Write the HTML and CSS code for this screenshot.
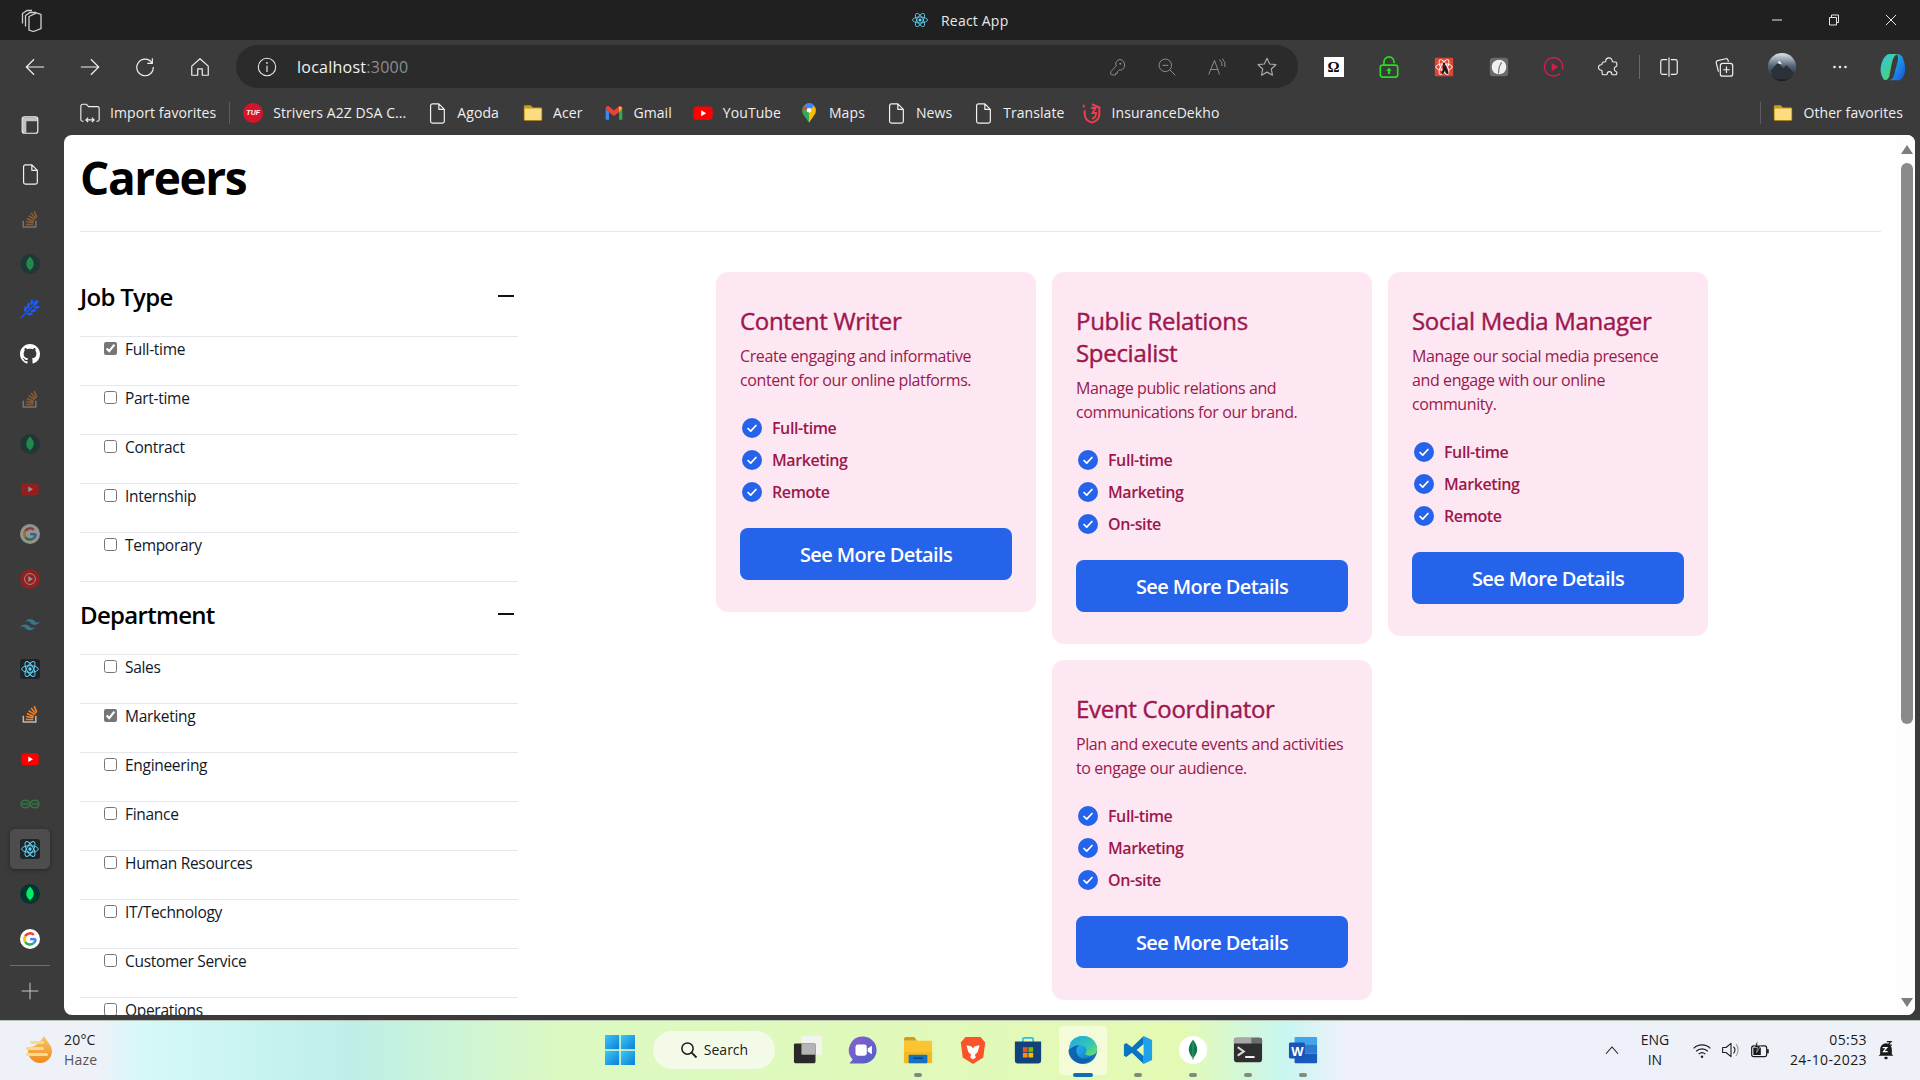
FILE: index.html
```html
<!DOCTYPE html>
<html lang="en">
<head>
<meta charset="utf-8">
<title>React App</title>
<link rel="stylesheet" href="styles.css">
</head>
<body>
<svg class="sprite" xmlns="http://www.w3.org/2000/svg">
  <defs>
    <linearGradient id="gEdge" x1="0" y1="0" x2="1" y2="1"><stop offset="0" stop-color="#35c1f1"/><stop offset=".5" stop-color="#1b9de2"/><stop offset="1" stop-color="#0c59a4"/></linearGradient>
    <linearGradient id="gEdgeTop" x1="0" y1="0" x2="1" y2="1"><stop offset="0" stop-color="#1fa8e0"/><stop offset=".6" stop-color="#35c8b0"/><stop offset="1" stop-color="#7ce04e"/></linearGradient>
    <linearGradient id="gCopL" x1="0" y1="0" x2="1" y2="1"><stop offset="0" stop-color="#2fc4e8"/><stop offset="1" stop-color="#52d64e"/></linearGradient>
    <linearGradient id="gWin" x1="0" y1="0" x2="1" y2="1"><stop offset="0" stop-color="#3fc6f8"/><stop offset="1" stop-color="#0a7fd6"/></linearGradient>
    <linearGradient id="gCop" x1="0" y1="0" x2="1" y2="1"><stop offset="0" stop-color="#2bd4c4"/><stop offset=".5" stop-color="#1b8fe8"/><stop offset="1" stop-color="#1b4fd0"/></linearGradient>
    <linearGradient id="gAvatar" x1="0" y1="0" x2="0" y2="1"><stop offset="0" stop-color="#dfe4ea"/><stop offset=".45" stop-color="#56677a"/><stop offset="1" stop-color="#15191e"/></linearGradient>
    <linearGradient id="gSun" x1="0" y1="0" x2="0" y2="1"><stop offset="0" stop-color="#f9c86a"/><stop offset="1" stop-color="#ee8a1e"/></linearGradient>
    <linearGradient id="gMeet" x1="0" y1="0" x2="1" y2="1"><stop offset="0" stop-color="#8a5fd0"/><stop offset="1" stop-color="#4f5fc8"/></linearGradient>
  </defs>
  <symbol id="i-tabs" viewBox="0 0 24 24"><g fill="none" stroke="currentColor" stroke-width="1.300"><path d="M2.500 15.500V5.500L7 2.500h5"/><path d="M5.500 18.500V7.500L10 4.500h6"/><path d="M9 8.500 16.500 5l4.500 1.500v14l-7.500 3-4.500-1.500z"/></g></symbol>
  <symbol id="i-back" viewBox="0 0 24 24"><path d="M22 12H2.500M11 3.500 2.500 12l8.500 8.500" fill="none" stroke="currentColor" stroke-width="1.300"/></symbol>
  <symbol id="i-forward" viewBox="0 0 24 24"><path d="M2 12h19.500M13 3.500l8.500 8.500-8.500 8.500" fill="none" stroke="currentColor" stroke-width="1.300"/></symbol>
  <symbol id="i-refresh" viewBox="0 0 24 24"><path d="M19.500 7.500A9 9 0 1 0 21 12M20 2.500v5.500h-5.500" fill="none" stroke="currentColor" stroke-width="1.300"/></symbol>
  <symbol id="i-home" viewBox="0 0 24 24"><path d="M3 11 12 3l9 8v10h-6.500v-7h-5v7H3z" fill="none" stroke="currentColor" stroke-width="1.300" stroke-linejoin="round"/></symbol>
  <symbol id="i-info" viewBox="0 0 24 24"><circle cx="12" cy="12" r="9.500" fill="none" stroke="currentColor" stroke-width="1.200"/><path d="M12 10.500v7" stroke="currentColor" stroke-width="1.300"/><circle cx="12" cy="7.500" r="1" fill="currentColor"/></symbol>
  <symbol id="i-key" viewBox="0 0 24 24"><path d="M14.500 3a6.500 6.500 0 0 1 2 12.700l-2-.200-2 2v2h-2v2h-5l-1-1v-3l6.500-6.500a6.500 6.500 0 0 1 3.500-8z" fill="none" stroke="currentColor" stroke-width="1.200"/><circle cx="16" cy="8" r="1.200" fill="currentColor"/></symbol>
  <symbol id="i-zoom" viewBox="0 0 24 24"><circle cx="10" cy="10" r="7.500" fill="none" stroke="currentColor" stroke-width="1.200"/><path d="M6.500 10h7M15.500 15.500 22 22" stroke="currentColor" stroke-width="1.200"/></symbol>
  <symbol id="i-read" viewBox="0 0 24 24"><path d="M2 21 9 4l6 17M4.500 15h9M15 3a9 9 0 0 1 3 8M18.500 2a11 11 0 0 1 3 10" fill="none" stroke="currentColor" stroke-width="1.200"/></symbol>
  <symbol id="i-star" viewBox="0 0 24 24"><path d="m12 2.500 2.900 6.200 6.800.8-5 4.700 1.300 6.800-6-3.400-6 3.400 1.300-6.800-5-4.700 6.800-.8z" fill="none" stroke="currentColor" stroke-width="1.300" stroke-linejoin="round"/></symbol>
  <symbol id="i-lock" viewBox="0 0 24 24"><g fill="none" stroke="#22e01f" stroke-width="1.800"><rect x="2.500" y="10" width="19" height="13" rx="2.500"/><path d="M6.500 10V6.500a5.500 5.500 0 0 1 11 0V8"/></g><path d="M12 12.800l3 3.200h-1.800v3.500h-2.400V16H9z" fill="#22e01f"/></symbol>
  <symbol id="i-redext" viewBox="0 0 24 24"><rect x="2" y="2" width="20" height="20" rx="1" fill="#e04534"/><g fill="none" stroke="#fff" stroke-width="1"><ellipse cx="12" cy="12" rx="9" ry="3.500"/><ellipse cx="12" cy="12" rx="9" ry="3.500" transform="rotate(60 12 12)"/><ellipse cx="12" cy="12" rx="9" ry="3.500" transform="rotate(120 12 12)"/></g><circle cx="12" cy="8.500" r="1.500" fill="#1a1a1a"/><path d="M11 10l3 .5 2 4.500 1 4-2 .5-2-3.500-2 3.500-2-.5 2-5z" fill="#1a1a1a"/></symbol>
  <symbol id="i-greyext" viewBox="0 0 24 24"><rect x="2" y="2" width="20" height="20" rx="3.500" fill="#6b6b6b"/><circle cx="12" cy="12" r="8" fill="#f0f0f0"/><path d="M11.500 19c0-5 1-9 3.500-12" fill="none" stroke="#777" stroke-width="1.300"/></symbol>
  <symbol id="i-playring" viewBox="0 0 24 24"><path d="M18.500 19A10 10 0 1 1 21 15" fill="none" stroke="#d41c4e" stroke-width="1.500"/><path d="m9.500 7.500 7 4.500-7 4.500z" fill="#d41c4e"/></symbol>
  <symbol id="i-puzzle" viewBox="0 0 24 24"><path d="M8.500 5.500a3.500 3.500 0 0 1 7 0c0 .5.500 1 1 1h2.500a1.500 1.500 0 0 1 1.500 1.500v2.500c0 .5-.5 1-1 1a3 3 0 0 0 0 5.500c.5.200 1 .5 1 1v1a1.500 1.500 0 0 1-1.500 1.500h-3c-.5 0-1-.5-1-1a2.500 2.500 0 0 0-5 0c0 .5-.5 1-1 1H6a1.500 1.500 0 0 1-1.500-1.500v-2.500c0-.5-.5-1-1-1a3 3 0 0 1 0-6c.5 0 1-.5 1-1V8A1.500 1.500 0 0 1 6 6.500h1.500c.5 0 1-.5 1-1z" fill="none" stroke="currentColor" stroke-width="1.200"/></symbol>
  <symbol id="i-split" viewBox="0 0 24 24"><path d="M10 4H5a2 2 0 0 0-2 2v12a2 2 0 0 0 2 2h5M14 4h5a2 2 0 0 1 2 2v12a2 2 0 0 1-2 2h-5M12 1.500v21" fill="none" stroke="currentColor" stroke-width="1.300"/></symbol>
  <symbol id="i-coll" viewBox="0 0 24 24"><path d="M6 17 3.500 7.500a2 2 0 0 1 1.500-2.500L14 3a2 2 0 0 1 2.300 1.300l.5 2" fill="none" stroke="currentColor" stroke-width="1.300"/><rect x="8" y="8" width="13.500" height="14" rx="2.500" fill="none" stroke="currentColor" stroke-width="1.300"/><path d="M14.700 11.500v7M11.200 15h7" stroke="currentColor" stroke-width="1.300"/></symbol>
  <symbol id="i-avatar" viewBox="0 0 32 32"><circle cx="16" cy="16" r="15" fill="url(#gAvatar)"/><path d="M4 20 12 11l5 6 4-3 8 8-6 7H9z" fill="#2b3138"/><path d="M11 12l2-3 3 4z" fill="#eef"/></symbol>
  <symbol id="i-dots" viewBox="0 0 24 24"><circle cx="6" cy="12" r="1.400" fill="currentColor"/><circle cx="12" cy="12" r="1.400" fill="currentColor"/><circle cx="18" cy="12" r="1.400" fill="currentColor"/></symbol>
  <symbol id="i-copilot" viewBox="0 0 32 32"><path d="M12 2h9c-3 1-5 4-6 9l-3 15c-1 3-3 4-5 4-3-3-5-9-4-14 1-7 5-14 9-14z" fill="url(#gCopL)"/><path d="M20 2c6 0 7 5 8 9 2 8 1 16-5 19H12c4-1 5-4 6-9l3-11c1-4 0-7-1-8z" fill="url(#gCop)"/></symbol>
  <symbol id="i-import" viewBox="0 0 24 24"><path d="M5 21H4a2 2 0 0 1-2-2V4.500a2 2 0 0 1 2-2h4l2.500 2.500h9.500a2 2 0 0 1 2 2v12a2 2 0 0 1-2 2h-1M7.500 19.500h9M10 17l-2.500 2.500L10 22M14 17l2.500 2.500L14 22" fill="none" stroke="currentColor" stroke-width="1.200"/></symbol>
  <symbol id="i-doc" viewBox="0 0 24 24"><path d="M5 4a2 2 0 0 1 2-2h7l6 6v13a2 2 0 0 1-2 2H7a2 2 0 0 1-2-2zM14 2v6h6" fill="none" stroke="currentColor" stroke-width="1.300" stroke-linejoin="round"/></symbol>
  <symbol id="i-folder" viewBox="0 0 24 24"><path d="M2 5a1.500 1.500 0 0 1 1.500-1.500h6L12 6h8.500A1.500 1.500 0 0 1 22 7.500V19a1.500 1.500 0 0 1-1.500 1.500h-17A1.500 1.500 0 0 1 2 19z" fill="#c99a1b"/><rect x="3" y="7" width="18" height="12.500" rx="1" fill="#fbdc7e"/></symbol>
  <symbol id="i-gmail" viewBox="0 0 24 24"><path d="M2 6v14h4V11z" fill="#4285f4"/><path d="M22 6v14h-4V11z" fill="#34a853"/><path d="M2 6c0-2 2-3 4-2l6 5 6-5c2-1 4 0 4 2l-4 5-6 4.500L6 11z" fill="#ea4335"/><path d="M18 4l4 2-4 5z" fill="#fbbc04"/></symbol>
  <symbol id="i-yt" viewBox="0 0 24 24"><rect x="1.500" y="5" width="21" height="14.500" rx="4" fill="#f00"/><path d="m10 9 5.500 3.200L10 15.500z" fill="#fff"/></symbol>
  <symbol id="i-maps" viewBox="0 0 24 24"><path d="M12 1.500a7.500 7.500 0 0 0-7.500 7.500c0 3 1 4.500 3 7l4.500 6.500z" fill="#34a853"/><path d="M12 1.500a7.500 7.500 0 0 1 7.500 7.500c0 3-1 4.500-3 7L12 22.500z" fill="#fbbc04"/><path d="M6 4 12 9H5z" fill="#ea4335"/><path d="M7 3.500A7 7 0 0 1 18 4l-6 5z" fill="#4285f4"/><circle cx="12" cy="9" r="2.500" fill="#fff"/></symbol>
  <symbol id="i-ins" viewBox="0 0 24 24"><path d="M3 3v3M12 2.500l8 3.500v7c0 5-3.500 8-8 9.500-4.500-1.500-8-4.500-8-9.500V9" fill="none" stroke="#ef3c4e" stroke-width="2.200"/><path d="M11 6.500h5l-3.500 5.500h4c0 3.500-2 5.500-4.500 6.500" fill="none" stroke="#ef3c4e" stroke-width="2"/></symbol>
  <symbol id="i-panel" viewBox="0 0 24 24"><rect x="3.500" y="3" width="17" height="18" rx="2.500" fill="none" stroke="currentColor" stroke-width="1.300"/><path d="M4 5.500A2 2 0 0 1 6 3.500h12a2 2 0 0 1 2 2V8H8v12.500H6a2 2 0 0 1-2-2z" fill="currentColor" opacity=".75"/></symbol>
  <symbol id="i-so" viewBox="0 0 24 24"><path d="M4 14v7.500h15V14" fill="none" stroke="#bcbbbb" stroke-width="1.800"/><path d="M7 18.500h9M7.300 15l8.800 1.500M8.300 11.500l8.200 3.400M10.300 8l7.400 4.800M13.300 4.800l5.600 6.500M17 2.500l3.200 7.500" fill="none" stroke="#f48024" stroke-width="1.900"/></symbol>
  <symbol id="i-mongo" viewBox="0 0 24 24"><circle cx="12" cy="12" r="12" fill="#023430"/><path d="M12 3c-3 3-4.500 6-4.500 9s2 5.500 4 7l.5 2.500.5-2.500c2-1.500 4-4 4-7s-1.500-6-4.500-9z" fill="#00ed64"/></symbol>
  <symbol id="i-wheat" viewBox="0 0 24 24"><path d="M1 23 17 7" stroke="#1a5cff" stroke-width="1.500"/><g fill="#1a5cff"><ellipse cx="19" cy="4.500" rx="2" ry="4" transform="rotate(45 19 4.500)"/><ellipse cx="14" cy="4" rx="1.700" ry="3.500" transform="rotate(10 14 4)"/><ellipse cx="20" cy="10" rx="1.700" ry="3.500" transform="rotate(80 20 10)"/><ellipse cx="10" cy="8" rx="1.700" ry="3.500" transform="rotate(10 10 8)"/><ellipse cx="16" cy="14" rx="1.700" ry="3.500" transform="rotate(80 16 14)"/><ellipse cx="6.500" cy="12" rx="1.700" ry="3.500" transform="rotate(10 6.500 12)"/><ellipse cx="12" cy="18" rx="1.700" ry="3.500" transform="rotate(80 12 18)"/></g></symbol>
  <symbol id="i-github" viewBox="0 0 16 16"><path fill="#fff" d="M8 0C3.580 0 0 3.580 0 8c0 3.540 2.290 6.530 5.470 7.590.4.070.55-.17.55-.38 0-.19-.01-.82-.01-1.490-2.010.37-2.530-.49-2.690-.94-.09-.23-.48-.94-.82-1.130-.28-.15-.68-.52-.01-.53.63-.01 1.080.58 1.230.82.72 1.210 1.870.87 2.330.66.070-.52.28-.87.51-1.070-1.780-.2-3.640-.89-3.640-3.950 0-.87.31-1.590.82-2.150-.08-.2-.36-1.020.08-2.120 0 0 .67-.21 2.200.82.64-.18 1.320-.27 2-.27.68 0 1.360.09 2 .27 1.530-1.040 2.200-.82 2.200-.82.44 1.100.16 1.920.08 2.120.51.56.82 1.270.82 2.150 0 3.070-1.870 3.750-3.650 3.950.29.25.54.73.54 1.480 0 1.070-.01 1.930-.01 2.200 0 .21.15.46.55.38A8.013 8.013 0 0 0 16 8c0-4.420-3.580-8-8-8z"/></symbol>
  <symbol id="i-google" viewBox="0 0 24 24"><circle cx="12" cy="12" r="12" fill="#fff"/><path d="M18.800 12.200H12.200" stroke="#4285f4" stroke-width="3"/><path d="M18.700 12a6.800 6.800 0 0 1-2.200 5" fill="none" stroke="#4285f4" stroke-width="3"/><path d="M16.500 17A6.800 6.800 0 0 1 6.200 15.500" fill="none" stroke="#34a853" stroke-width="3"/><path d="M6.200 15.500a6.800 6.800 0 0 1 0-7" fill="none" stroke="#fbbc05" stroke-width="3"/><path d="M6.200 8.500A6.800 6.800 0 0 1 16.600 7" fill="none" stroke="#ea4335" stroke-width="3"/></symbol>
  <symbol id="i-ytm" viewBox="0 0 24 24"><circle cx="12" cy="12" r="12" fill="#f00"/><circle cx="12" cy="12" r="6.500" fill="none" stroke="#fff" stroke-width="1.200"/><path d="m10 8.500 5.500 3.500-5.500 3.500z" fill="#fff"/></symbol>
  <symbol id="i-tw" viewBox="0 0 24 24"><path d="M12 6c-3 0-5 1.500-6 4.500 1-1.500 2.500-2 4-1.700 1 .2 1.700.9 2.500 1.700 1.200 1.200 2.500 2.500 5.500 2.500s5-1.500 6-4.500c-1 1.500-2.500 2-4 1.700-1-.2-1.700-.9-2.500-1.700C16.300 7.300 15 6 12 6zM6 12.500c-3 0-5 1.500-6 4.500 1-1.500 2.500-2 4-1.700 1 .2 1.700.9 2.500 1.700C7.700 18.200 9 19.500 12 19.500s5-1.500 6-4.500c-1 1.500-2.500 2-4 1.700-1-.2-1.700-.9-2.500-1.700-1.200-1.200-2.500-2.500-5.500-2.500z" fill="#38bdf8"/></symbol>
  <symbol id="i-react" viewBox="0 0 24 24"><rect width="24" height="24" rx="3" fill="#20232a"/><g fill="none" stroke="#61dafb" stroke-width="1.100"><ellipse cx="12" cy="12" rx="10" ry="4"/><ellipse cx="12" cy="12" rx="10" ry="4" transform="rotate(60 12 12)"/><ellipse cx="12" cy="12" rx="10" ry="4" transform="rotate(120 12 12)"/></g><circle cx="12" cy="12" r="2" fill="#61dafb"/></symbol>
  <symbol id="i-reactbare" viewBox="0 0 24 24"><g fill="none" stroke="#61dafb" stroke-width="1.100"><ellipse cx="12" cy="12" rx="10" ry="4"/><ellipse cx="12" cy="12" rx="10" ry="4" transform="rotate(60 12 12)"/><ellipse cx="12" cy="12" rx="10" ry="4" transform="rotate(120 12 12)"/></g><circle cx="12" cy="12" r="2" fill="#61dafb"/></symbol>
  <symbol id="i-gfg" viewBox="0 0 24 24"><path d="M12 12c-1-3-3.500-4.500-6-4.500A4.500 4.500 0 0 0 6 16.500c2.500 0 5-1.500 6-4.500zm0 0c1-3 3.500-4.500 6-4.500a4.500 4.500 0 0 1 0 9c-2.500 0-5-1.500-6-4.500zM1.500 12h8M14.500 12h8" fill="none" stroke="#2f8d46" stroke-width="2"/></symbol>
  <symbol id="i-plus" viewBox="0 0 24 24"><path d="M12 2v20M2 12h20" stroke="currentColor" stroke-width="1.200"/></symbol>
  <symbol id="i-check" viewBox="0 0 24 24"><circle cx="12" cy="12" r="10" fill="#2563eb"/><path d="m8 12.500 2.700 2.700L16 9.500" fill="none" stroke="#fff" stroke-width="1.700" stroke-linecap="round" stroke-linejoin="round"/></symbol>
  <symbol id="i-sun" viewBox="0 0 32 32"><path d="M20 2c3 6 8 9 8 15a12 12 0 0 1-24 0c0-2 1-3 2-4 4 0 9-3 14-11z" fill="url(#gSun)"/><g fill="#f7d98f"><rect x="6" y="7" width="14" height="3" rx="1.500"/><rect x="2" y="13" width="18" height="3" rx="1.500"/><rect x="2" y="19" width="22" height="3" rx="1.500"/></g></symbol>
  <symbol id="i-win" viewBox="0 0 30 30"><rect width="14.200" height="14.200" fill="url(#gWin)"/><rect x="15.800" width="14.200" height="14.200" fill="url(#gWin)"/><rect y="15.800" width="14.200" height="14.200" fill="url(#gWin)"/><rect x="15.800" y="15.800" width="14.200" height="14.200" fill="url(#gWin)"/></symbol>
  <symbol id="i-search" viewBox="0 0 24 24"><circle cx="10" cy="10" r="7.500" fill="none" stroke="#1a1a1a" stroke-width="2"/><path d="m15.500 15.500 6.500 6.500" stroke="#1a1a1a" stroke-width="2.400"/></symbol>
  <symbol id="i-taskview" viewBox="0 0 32 32"><rect x="9" y="1" width="22" height="20" rx="1" fill="#f4f4f4" opacity=".9"/><rect x="1" y="9" width="23" height="21" rx="1.500" fill="#2a2a2a"/><rect x="9" y="9" width="15" height="12" fill="#b5b5b5"/></symbol>
  <symbol id="i-meet" viewBox="0 0 32 32"><path d="M16 1.500a14.500 14.500 0 0 1 0 29H1.500l3.500-4.500A14.500 14.500 0 0 1 16 1.500z" fill="url(#gMeet)"/><rect x="8" y="10" width="12" height="12" rx="2.500" fill="#fff"/><path d="m21 14.500 4.500-3v9l-4.500-3z" fill="#fff"/></symbol>
  <symbol id="i-explorer" viewBox="0 0 32 32"><path d="M1 4a2 2 0 0 1 2-2h9l3 4H1z" fill="#d49b17"/><rect x="1" y="6" width="30" height="24" rx="1.500" fill="#fcc430"/><rect x="1" y="18" width="30" height="12" fill="#f5b81f"/><rect x="6" y="21" width="20" height="9" rx="1" fill="#1273c5"/><rect x="11" y="24" width="10" height="1.500" fill="#0c3f70"/></symbol>
  <symbol id="i-brave" viewBox="0 0 32 32"><path d="M8 2h16l5 6-2 16-11 7-11-7L3 8z" fill="#fb542b"/><path d="M9 11l5 1 2 2 2-2 5-1-2 7-3 3 1 3-3 2-3-2 1-3-3-3z" fill="#fff"/></symbol>
  <symbol id="i-store" viewBox="0 0 32 32"><path d="M10.500 8V4.500a1.500 1.500 0 0 1 1.500-1.500h8a1.500 1.500 0 0 1 1.500 1.500V8" fill="none" stroke="#29c0e8" stroke-width="1.800"/><path d="M2 7h28v20a3.500 3.500 0 0 1-3.500 3.500h-21A3.500 3.500 0 0 1 2 27z" fill="#12427a"/><rect x="10.500" y="13" width="5" height="5" fill="#f25022"/><rect x="16.500" y="13" width="5" height="5" fill="#7fba00"/><rect x="10.500" y="19" width="5" height="5" fill="#ff8c1a"/><rect x="16.500" y="19" width="5" height="5" fill="#ffb900"/></symbol>
  <symbol id="i-edge" viewBox="0 0 32 32"><circle cx="16" cy="16" r="15" fill="url(#gEdge)"/><path d="M2 9C5 4 10 1 16 1c8 0 15 6 15 14 0 5-4 7-8 7-2.500 0-4.500-.8-5-2.200 2.500-1 3-8-4-8.800C8 10.500 4 9 2 9z" fill="url(#gEdgeTop)"/><path d="M12 11c-2.500 1.500-3.500 4-3 7 1 5 5.500 7.500 10 7 3-.3 5.500-1.500 7.500-3.500-2.500 5.500-7.500 9-13.500 8.500-7-.8-12.500-6-12.500-14C4 13 8 10.500 12 11z" fill="#0c59a4" opacity=".85"/></symbol>
  <symbol id="i-vscode" viewBox="0 0 32 32"><path d="M22 1l9 4.300v21.400L22 31z" fill="#1fa0ea"/><path d="M22 1 9.500 13 3.500 8.500 1 10v12l2.500 1.500 6-4.500L22 31v-8.500L14.500 16 22 9.500z" fill="#0a74c2"/></symbol>
  <symbol id="i-mongow" viewBox="0 0 32 32"><circle cx="16" cy="16" r="15" fill="#fff"/><path d="M16 5c-3 3.500-4.500 7-4.500 10.500S13.500 22 15.300 24l.7 3 .7-3c1.800-2 3.800-5 3.800-8.500S19 8.500 16 5z" fill="#0d7a4c"/><path d="M16 7v19" stroke="#64b48e" stroke-width=".6"/></symbol>
  <symbol id="i-term" viewBox="0 0 32 32"><rect x="1" y="3" width="30" height="26" rx="2.500" fill="#2f2f2f"/><path d="M1 9V5.500A2.500 2.500 0 0 1 3.500 3H20v6z" fill="#a8a8a8"/><path d="M20 3h8.500A2.500 2.500 0 0 1 31 5.500V9H20z" fill="#6d6d6d"/><path d="m5 13 6.500 4.500L5 22" fill="none" stroke="#d8d8d8" stroke-width="2.200"/><path d="M13 23.500h10" stroke="#fff" stroke-width="2"/></symbol>
  <symbol id="i-word" viewBox="0 0 32 32"><path d="M7 3a1 1 0 0 1 1-1h22a1 1 0 0 1 1 1v7H7z" fill="#41a5ee"/><rect x="7" y="10" width="24" height="10" fill="#2b7cd3"/><path d="M7 20h24v9a1 1 0 0 1-1 1H8a1 1 0 0 1-1-1z" fill="#185abd"/><rect x="1" y="8" width="17" height="17" rx="1.500" fill="#1a55b5"/></symbol>
  <symbol id="i-caret" viewBox="0 0 24 24"><path d="m4 17 8-9 8 9" fill="none" stroke="#1a1a1a" stroke-width="1.400"/></symbol>
  <symbol id="i-wifi" viewBox="0 0 24 24"><path d="M2 10a14 14 0 0 1 20 0M5 13.500a10 10 0 0 1 14 0M8 17a6 6 0 0 1 8 0" fill="none" stroke="#1a1a1a" stroke-width="1.400"/><circle cx="12" cy="20" r="1.500" fill="#1a1a1a"/></symbol>
  <symbol id="i-vol" viewBox="0 0 24 24"><path d="M2 9h4l6-5v16l-6-5H2z" fill="none" stroke="#1a1a1a" stroke-width="1.300" stroke-linejoin="round"/><path d="M15 8a6 6 0 0 1 0 8" fill="none" stroke="#1a1a1a" stroke-width="1.300"/><path d="M18 5a11 11 0 0 1 0 14" fill="none" stroke="#999" stroke-width="1.300"/></symbol>
  <symbol id="i-batt" viewBox="0 0 24 24"><rect x="2" y="7" width="18" height="13" rx="2.500" fill="none" stroke="#1a1a1a" stroke-width="1.400"/><rect x="4" y="9" width="9" height="9" fill="#1a1a1a"/><rect x="20.500" y="11" width="2" height="5" fill="#1a1a1a"/><path d="M9 1 5 9h4l-1 6 5-8H9z" fill="#1a1a1a" stroke="#eef1f8" stroke-width=".6"/></symbol>
  <symbol id="i-bell" viewBox="0 0 24 24"><path d="M5 17V11a7 7 0 0 1 14 0v6l2 2H3z" fill="#1a1a1a"/><rect x="10" y="20" width="4" height="3" rx="1.500" fill="#1a1a1a"/><path d="M13 2h5l-4 4h5" fill="none" stroke="#1a1a1a" stroke-width="1.500"/><path d="M8 9h5l-4 5h5" fill="none" stroke="#fff" stroke-width="1.500"/></symbol>
  <symbol id="i-min" viewBox="0 0 12 12"><path d="M1 6h10" stroke="currentColor" stroke-width="1"/></symbol>
  <symbol id="i-restore" viewBox="0 0 12 12"><path d="M1.500 3.500h7v7.500h-7zM3.500 3.500V1h7v7.500h-2" fill="none" stroke="currentColor" stroke-width="1"/></symbol>
  <symbol id="i-close" viewBox="0 0 12 12"><path d="m1 1 10 10M11 1 1 11" stroke="currentColor" stroke-width="1"/></symbol>
</svg>

<div class="titlebar">
  <svg class="ic tabs-ic"><use href="#i-tabs"/></svg>
  <div class="title"><svg class="ic ic-18"><use href="#i-reactbare"/></svg><span>React App</span></div>
  <div class="winctl">
    <svg class="ic ic-12"><use href="#i-min"/></svg>
    <svg class="ic ic-12"><use href="#i-restore"/></svg>
    <svg class="ic ic-12"><use href="#i-close"/></svg>
  </div>
</div>

<div class="toolbar">
  <div class="navgroup">
    <span class="tb"><svg class="ic ic-22"><use href="#i-back"/></svg></span>
    <span class="tb"><svg class="ic ic-22"><use href="#i-forward"/></svg></span>
    <span class="tb"><svg class="ic ic-22"><use href="#i-refresh"/></svg></span>
    <span class="tb"><svg class="ic ic-22"><use href="#i-home"/></svg></span>
  </div>
  <div class="address">
    <svg class="ic ic-22"><use href="#i-info"/></svg>
    <span class="url">localhost<span class="port">:3000</span></span>
    <div class="addr-actions">
      <span class="tb"><svg class="ic ic-20"><use href="#i-key"/></svg></span>
      <span class="tb"><svg class="ic ic-20"><use href="#i-zoom"/></svg></span>
      <span class="tb"><svg class="ic ic-20"><use href="#i-read"/></svg></span>
      <span class="tb tb-star"><svg class="ic ic-22"><use href="#i-star"/></svg></span>
    </div>
  </div>
  <div class="exts">
    <span class="tb"><span class="omega">Ω</span></span>
    <span class="tb"><svg class="ic ic-22"><use href="#i-lock"/></svg></span>
    <span class="tb"><svg class="ic ic-22"><use href="#i-redext"/></svg></span>
    <span class="tb"><svg class="ic ic-22"><use href="#i-greyext"/></svg></span>
    <span class="tb"><svg class="ic ic-22"><use href="#i-playring"/></svg></span>
    <span class="tb"><svg class="ic ic-22"><use href="#i-puzzle"/></svg></span>
    <span class="tb-div"></span>
    <span class="tb tb-after"><svg class="ic ic-22"><use href="#i-split"/></svg></span>
    <span class="tb"><svg class="ic ic-22"><use href="#i-coll"/></svg></span>
    <span class="tb tb-profile"><svg class="ic ic-30"><use href="#i-avatar"/></svg></span>
    <span class="tb"><svg class="ic ic-22"><use href="#i-dots"/></svg></span>
    <span class="tb tb-cop"><svg class="ic ic-30"><use href="#i-copilot"/></svg></span>
  </div>
</div>

<div class="body-row">
  <nav class="sidebar">
    <span class="sb sb-first"><svg class="ic ic-22 light"><use href="#i-panel"/></svg></span>
    <span class="sb"><svg class="ic ic-22 light"><use href="#i-doc"/></svg></span>
    <span class="sb dim"><svg class="ic ic-20"><use href="#i-so"/></svg></span>
    <span class="sb dim"><svg class="ic ic-20"><use href="#i-mongo"/></svg></span>
    <span class="sb"><svg class="ic ic-20"><use href="#i-wheat"/></svg></span>
    <span class="sb"><svg class="ic ic-20"><use href="#i-github"/></svg></span>
    <span class="sb dim"><svg class="ic ic-20"><use href="#i-so"/></svg></span>
    <span class="sb dim"><svg class="ic ic-20"><use href="#i-mongo"/></svg></span>
    <span class="sb dim"><svg class="ic ic-20"><use href="#i-yt"/></svg></span>
    <span class="sb dim"><svg class="ic ic-20"><use href="#i-google"/></svg></span>
    <span class="sb dim"><svg class="ic ic-20"><use href="#i-ytm"/></svg></span>
    <span class="sb dim"><svg class="ic ic-20"><use href="#i-tw"/></svg></span>
    <span class="sb"><svg class="ic ic-20"><use href="#i-react"/></svg></span>
    <span class="sb"><svg class="ic ic-20"><use href="#i-so"/></svg></span>
    <span class="sb"><svg class="ic ic-20"><use href="#i-yt"/></svg></span>
    <span class="sb dim-soft"><svg class="ic ic-20"><use href="#i-gfg"/></svg></span>
    <span class="sb"><span class="sb-active"><svg class="ic ic-20"><use href="#i-react"/></svg></span></span>
    <span class="sb"><svg class="ic ic-20"><use href="#i-mongo"/></svg></span>
    <span class="sb"><svg class="ic ic-20"><use href="#i-google"/></svg></span>
    <span class="sb-rule"></span>
    <span class="sb sb-plus"><svg class="ic ic-20 muted"><use href="#i-plus"/></svg></span>
  </nav>

  <div class="viewport-col">
    <div class="bookmarks">
      <a class="bm"><svg class="ic ic-22 light"><use href="#i-import"/></svg>Import favorites</a>
      <span class="bm-div"></span>
      <a class="bm"><span class="tuf">TUF</span>Strivers A2Z DSA C...</a>
      <a class="bm bm-agoda"><svg class="ic ic-22 light"><use href="#i-doc"/></svg>Agoda</a>
      <a class="bm bm-acer"><svg class="ic ic-22"><use href="#i-folder"/></svg>Acer</a>
      <a class="bm"><svg class="ic ic-20"><use href="#i-gmail"/></svg>Gmail</a>
      <a class="bm bm-youtube"><svg class="ic ic-22"><use href="#i-yt"/></svg>YouTube</a>
      <a class="bm"><svg class="ic ic-22"><use href="#i-maps"/></svg>Maps</a>
      <a class="bm"><svg class="ic ic-22 light"><use href="#i-doc"/></svg>News</a>
      <a class="bm bm-translate"><svg class="ic ic-22 light"><use href="#i-doc"/></svg>Translate</a>
      <a class="bm"><svg class="ic ic-22"><use href="#i-ins"/></svg>InsuranceDekho</a>
      <span class="bm-div bm-div-end"></span>
      <a class="bm"><svg class="ic ic-22"><use href="#i-folder"/></svg>Other favorites</a>
    </div>

    <div class="viewport">
      <main class="page">
        <header class="page-head"><h1>Careers</h1></header>
        <div class="page-body">
          <aside class="filters">
            <section class="filter">
              <div class="filter-head"><h2>Job Type</h2><span class="minus"></span></div>
              <label class="opt"><input type="checkbox" checked>Full-time</label>
              <label class="opt"><input type="checkbox">Part-time</label>
              <label class="opt"><input type="checkbox">Contract</label>
              <label class="opt"><input type="checkbox">Internship</label>
              <label class="opt"><input type="checkbox">Temporary</label>
            </section>
            <section class="filter">
              <div class="filter-head"><h2>Department</h2><span class="minus"></span></div>
              <label class="opt"><input type="checkbox">Sales</label>
              <label class="opt"><input type="checkbox" checked>Marketing</label>
              <label class="opt"><input type="checkbox">Engineering</label>
              <label class="opt"><input type="checkbox">Finance</label>
              <label class="opt"><input type="checkbox">Human Resources</label>
              <label class="opt"><input type="checkbox">IT/Technology</label>
              <label class="opt"><input type="checkbox">Customer Service</label>
              <label class="opt"><input type="checkbox">Operations</label>
            </section>
          </aside>
          <div class="cards">
            <article class="card">
              <h3>Content Writer</h3>
              <p>Create engaging and informative content for our online platforms.</p>
              <ul>
                <li><svg class="ic ic-24"><use href="#i-check"/></svg>Full-time</li>
                <li><svg class="ic ic-24"><use href="#i-check"/></svg>Marketing</li>
                <li><svg class="ic ic-24"><use href="#i-check"/></svg>Remote</li>
              </ul>
              <button type="button">See More Details</button>
            </article>
            <article class="card">
              <h3>Public Relations Specialist</h3>
              <p>Manage public relations and communications for our brand.</p>
              <ul>
                <li><svg class="ic ic-24"><use href="#i-check"/></svg>Full-time</li>
                <li><svg class="ic ic-24"><use href="#i-check"/></svg>Marketing</li>
                <li><svg class="ic ic-24"><use href="#i-check"/></svg>On-site</li>
              </ul>
              <button type="button">See More Details</button>
            </article>
            <article class="card">
              <h3>Social Media Manager</h3>
              <p>Manage our social media presence and engage with our online community.</p>
              <ul>
                <li><svg class="ic ic-24"><use href="#i-check"/></svg>Full-time</li>
                <li><svg class="ic ic-24"><use href="#i-check"/></svg>Marketing</li>
                <li><svg class="ic ic-24"><use href="#i-check"/></svg>Remote</li>
              </ul>
              <button type="button">See More Details</button>
            </article>
            <article class="card card-center">
              <h3>Event Coordinator</h3>
              <p>Plan and execute events and activities to engage our audience.</p>
              <ul>
                <li><svg class="ic ic-24"><use href="#i-check"/></svg>Full-time</li>
                <li><svg class="ic ic-24"><use href="#i-check"/></svg>Marketing</li>
                <li><svg class="ic ic-24"><use href="#i-check"/></svg>On-site</li>
              </ul>
              <button type="button">See More Details</button>
            </article>
          </div>
        </div>
      </main>
      <div class="scrollbar">
        <span class="arrow arrow-up"></span>
        <span class="thumb"></span>
        <span class="arrow arrow-down"></span>
      </div>
    </div>
  </div>
</div>

<footer class="taskbar">
  <div class="weather">
    <svg class="ic ic-32"><use href="#i-sun"/></svg>
    <div class="weather-text"><span>20°C</span><span class="haze">Haze</span></div>
  </div>
  <div class="tasks">
    <span class="winlogo"><svg class="ic ic-30"><use href="#i-win"/></svg></span>
    <span class="searchbox"><svg class="ic ic-18"><use href="#i-search"/></svg>Search</span>
    <span class="app"><svg class="ic ic-30"><use href="#i-taskview"/></svg></span>
    <span class="app"><svg class="ic ic-30"><use href="#i-meet"/></svg></span>
    <span class="app"><svg class="ic ic-30"><use href="#i-explorer"/></svg><i class="dot"></i></span>
    <span class="app"><svg class="ic ic-30"><use href="#i-brave"/></svg></span>
    <span class="app"><svg class="ic ic-30"><use href="#i-store"/></svg></span>
    <span class="app app-active"><svg class="ic ic-30"><use href="#i-edge"/></svg><i class="dot dot-active"></i></span>
    <span class="app"><svg class="ic ic-30"><use href="#i-vscode"/></svg><i class="dot"></i></span>
    <span class="app"><svg class="ic ic-30"><use href="#i-mongow"/></svg><i class="dot"></i></span>
    <span class="app"><svg class="ic ic-30"><use href="#i-term"/></svg><i class="dot"></i></span>
    <span class="app app-word"><svg class="ic ic-30"><use href="#i-word"/></svg><b class="word-w">W</b><i class="dot"></i></span>
  </div>
  <div class="tray">
    <svg class="ic ic-18"><use href="#i-caret"/></svg>
    <div class="lang"><span>ENG</span><span>IN</span></div>
    <div class="status">
      <svg class="ic ic-20"><use href="#i-wifi"/></svg>
      <svg class="ic ic-20"><use href="#i-vol"/></svg>
      <svg class="ic ic-20"><use href="#i-batt"/></svg>
    </div>
    <div class="clock"><span>05:53</span><span>24-10-2023</span></div>
    <svg class="ic ic-20 bell"><use href="#i-bell"/></svg>
  </div>
</footer>
</body>
</html>
```

FILE: styles.css
```css
* { box-sizing: border-box; }
html, body { margin: 0; height: 100%; }
body {
  width: 1920px;
  height: 1080px;
  overflow: hidden;
  display: flex;
  flex-direction: column;
  background: #3b3b3b;
  color: #000;
  font-family: "Open Sans", "Noto Sans", "Liberation Sans", sans-serif;
  font-size: 16px;
}
.sprite { position: absolute; width: 0; height: 0; }
.ic { display: block; flex: none; color: inherit; }
.ic-12 { width: 12px; height: 12px; }
.ic-18 { width: 18px; height: 18px; }
.ic-20 { width: 20px; height: 20px; }
.ic-22 { width: 22px; height: 22px; }
.ic-24 { width: 24px; height: 24px; }
.ic-30 { width: 30px; height: 30px; }
.ic-32 { width: 32px; height: 32px; }
.light { color: #f2f2f2; }
.muted { color: #c8c8c8; }

.titlebar {
  height: 40px;
  flex: none;
  background: #202020;
  color: #e6e6e6;
  display: flex;
  align-items: center;
  padding-left: 20px;
  font-size: 14px;
  letter-spacing: 0.2px;
}
.tabs-ic { width: 24px; height: 24px; color: #d0d0d0; }
.title {
  display: flex;
  align-items: center;
  gap: 12px;
  margin-left: 867px;
  color: #e8e8e8;
}
.winctl {
  margin-left: auto;
  display: flex;
  gap: 45px;
  padding-right: 23px;
}

.toolbar {
  height: 50px;
  flex: none;
  background: #3b3b3b;
  display: flex;
  align-items: center;
  color: #f0f0f0;
  padding-top: 3px;
}
.tb {
  width: 55px;
  height: 43px;
  display: flex;
  align-items: center;
  justify-content: center;
  flex: none;
}
.navgroup { display: flex; padding-left: 7px; margin-right: 9px; }
.address {
  width: 1062px;
  height: 43px;
  border-radius: 22px;
  background: #2b2b2b;
  display: flex;
  align-items: center;
  padding-left: 20px;
  color: #e6e6e6;
}
.url { margin-left: 19px; font-size: 16px; letter-spacing: 0.25px; color: #f2f2f2; }
.port { color: #8d8d8d; }
.addr-actions { margin-left: auto; display: flex; color: #8c8c8c; padding-right: 6px; }
.addr-actions .tb { width: 50px; }
.tb-star { color: #a8a8a8; }
.exts { display: flex; align-items: center; padding-left: 8px; }
.omega {
  width: 20px;
  height: 20px;
  background: #fff;
  color: #000;
  font-family: "Liberation Serif", serif;
  font-weight: 700;
  font-size: 15px;
  line-height: 20px;
  text-align: center;
}
.tb-div { width: 1px; height: 24px; background: #6a6a6a; margin: 0 2px 0 3px; flex: none; }
.tb-after { margin-left: -1px; }
.tb-profile { width: 61px; }
.tb-cop { width: 52px; }

.body-row { flex: 1; min-height: 0; display: flex; }
.sidebar {
  width: 64px;
  flex: none;
  display: flex;
  flex-direction: column;
  align-items: center;
  padding: 12px 4px 0 0;
}
.sb {
  width: 60px;
  height: 45px;
  flex: none;
  display: flex;
  align-items: center;
  justify-content: center;
}
.sb-first { margin-bottom: 4px; }
.dim .ic { opacity: 0.45; }
.dim-soft .ic { opacity: 0.7; }
.sb-active {
  width: 40px;
  height: 40px;
  border-radius: 5px;
  background: #4d4d4d;
  box-shadow: 0 1px 4px rgba(0, 0, 0, 0.4);
  display: flex;
  align-items: center;
  justify-content: center;
}
.sb-rule { width: 40px; height: 1px; background: #6e6e6e; margin-top: 4px; flex: none; }
.sb-plus { margin-top: 2px; }

.viewport-col { flex: 1; min-width: 0; display: flex; flex-direction: column; padding: 0 5px 5px 0; }
.bookmarks {
  height: 45px;
  flex: none;
  display: flex;
  align-items: center;
  color: #efefef;
  font-size: 14px;
  letter-spacing: 0.08px;
  padding-left: 15px;
}
.bm { display: flex; align-items: center; gap: 9px; margin-right: 20px; white-space: nowrap; }
.bm-agoda { margin-right: 23px; }
.bm-acer { margin-right: 22px; }
.bm-youtube { margin-right: 17px; }
.bm-translate { margin-right: 16px; }
.tuf {
  width: 20px;
  height: 20px;
  margin: 0 1px;
  border-radius: 50%;
  background: #d8132b;
  color: #fff;
  font: italic 700 7px/20px "Liberation Sans", sans-serif;
  letter-spacing: 0;
  text-align: center;
  flex: none;
}
.bm-div { width: 1px; height: 22px; background: #5c5c5c; margin: 0 12px 0 -7px; flex: none; }
.bm-div-end { margin: 0 11px 0 auto; }
.bookmarks .bm:last-child { margin-right: 12px; }

.viewport {
  flex: 1;
  min-height: 0;
  background: #fff;
  border-radius: 8px;
  overflow: hidden;
  display: flex;
}
.page { flex: 1; min-width: 0; padding: 0 16px; overflow: hidden; }
.page-head { border-bottom: 1px solid #e5e7eb; padding-top: 14px; height: 97px; }
h1 {
  margin: 0;
  font-size: 46px;
  line-height: 56px;
  font-weight: 700;
  letter-spacing: -1.4px;
}
.page-body { display: flex; align-items: flex-start; padding-top: 32px; }
.filters { width: 438px; flex: none; }
.filter { border-bottom: 1px solid #e5e7eb; }
.filter-head { height: 72px; display: flex; align-items: center; justify-content: space-between; padding: 0 4px 6px 0; }
h2 { margin: 0; font-size: 24px; line-height: 32px; font-weight: 600; letter-spacing: -0.7px; }
.minus { width: 16px; height: 2px; background: #111; margin-bottom: 2px; }
.opt {
  display: flex;
  align-items: flex-start;
  gap: 8px;
  height: 49px;
  border-top: 1px solid #e5e7eb;
  padding-left: 24px;
  line-height: 24px;
  letter-spacing: -0.3px;
  color: #111827;
  font-size: 15.500px;
}
.opt input {
  width: 13px;
  height: 13px;
  margin: 5px 0 0;
  flex: none;
  accent-color: #767676;
}
.cards {
  margin: 8px 0 0 198px;
  display: grid;
  grid-template-columns: repeat(3, 320px);
  gap: 16px;
  align-items: start;
}
.card {
  background: #fce7f3;
  border-radius: 12px;
  padding: 32px 24px;
  color: #9d174d;
}
.card-center { grid-column: 2; }
h3 {
  margin: 0;
  padding-top: 1px;
  font-size: 24px;
  line-height: 32px;
  font-weight: 500;
  letter-spacing: -0.3px;
  -webkit-text-stroke: 0.4px #9d174d;
}
.card p { margin: 7px 0 0; font-size: 16px; line-height: 24px; letter-spacing: -0.4px; }
.card ul { list-style: none; margin: 24px 0 0; padding: 0; display: flex; flex-direction: column; gap: 8px; }
.card li { display: flex; align-items: center; gap: 8px; line-height: 24px; font-weight: 600; letter-spacing: -0.4px; }
.card button {
  display: block;
  width: 100%;
  height: 52px;
  margin-top: 24px;
  padding: 2px 0 0;
  border: 0;
  border-radius: 8px;
  background: #2563eb;
  color: #fff;
  font: 600 20px/28px "Open Sans", "Noto Sans", sans-serif;
  letter-spacing: -0.6px;
}

.scrollbar {
  width: 18px;
  flex: none;
  background: #fdfdfd;
  display: flex;
  flex-direction: column;
  align-items: center;
  padding: 10px 2px 8px 4px;
}
.arrow { width: 0; height: 0; border-left: 6px solid transparent; border-right: 6px solid transparent; flex: none; }
.arrow-up { border-bottom: 9px solid #7d7d7d; }
.arrow-down { border-top: 9px solid #7d7d7d; margin-top: auto; }
.thumb { width: 12px; height: 561px; margin-top: 9px; background: #8a8a8a; border-radius: 6px; flex: none; }

.taskbar {
  height: 60px;
  flex: none;
  display: flex;
  align-items: stretch;
  color: #1a1a1a;
  font-size: 14px;
  background: linear-gradient(90deg, #eef1f8 0, #eef1f8 100px, #d6f8f9 140px, #bdefe8 350px, #dcf9c2 560px, #e4fab4 1180px, #c8f6f0 1285px, #eef0fa 1345px, #eef1f8 1920px);
  border-top: 1px solid #b9c4b6;
}
.weather { width: 597px; flex: none; display: flex; align-items: center; gap: 8px; padding: 0 0 2px 24px; }
.weather-text { display: flex; flex-direction: column; line-height: 20px; letter-spacing: 0.2px; }
.haze { color: #555; }
.tasks { display: flex; align-items: center; height: 100%; }
.winlogo { width: 46px; display: flex; justify-content: center; margin-bottom: 2px; }
.searchbox {
  width: 122px;
  height: 38px;
  margin: 0 5px 2px 10px;
  border-radius: 19px;
  background: #f3fbe8;
  display: flex;
  align-items: center;
  justify-content: center;
  gap: 6px;
}
.app {
  width: 55px;
  height: 100%;
  flex: none;
  position: relative;
  display: flex;
  flex-direction: column;
  align-items: center;
  padding-top: 14px;
}
.app-active::before {
  content: "";
  position: absolute;
  left: 4px;
  right: 3px;
  top: 5px;
  bottom: 5px;
  background: #f3fbd9;
  border-radius: 4px;
}
.app-active .ic { position: relative; }
.dot { width: 8px; height: 4px; border-radius: 2px; background: #7f8c7c; margin-top: 8px; position: relative; }
.dot-active { width: 20px; height: 4px; border-radius: 2px; background: #0f6cbd; }
.word-w {
  position: absolute;
  left: 14px;
  top: 22px;
  width: 17px;
  text-align: center;
  color: #fff;
  font: 700 13px/17px "Liberation Sans", sans-serif;
}
.tray { margin-left: auto; display: flex; align-items: center; padding: 0 24px 2px 0; }
.lang { display: flex; flex-direction: column; align-items: center; line-height: 20px; margin-left: 14px; width: 40px; }
.status { display: flex; gap: 9px; margin-left: 17px; }
.clock { display: flex; flex-direction: column; align-items: flex-end; line-height: 20px; margin-left: 20px; letter-spacing: 0.4px; }
.bell { margin-left: 9px; }
```
